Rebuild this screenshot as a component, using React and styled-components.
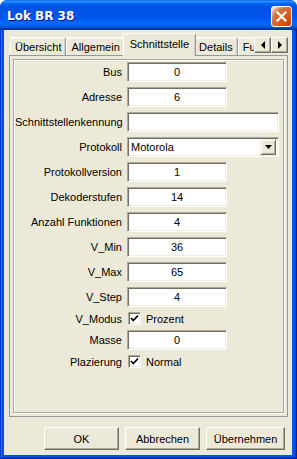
import React from 'react';
import styled, { createGlobalStyle } from 'styled-components';

const GlobalStyle = createGlobalStyle`
  html, body {
    margin: 0;
    padding: 0;
    background: #ffffff;
  }
  body {
    font-family: "Liberation Sans", Arial, sans-serif;
    font-size: 11px;
    color: #000;
  }
`;

const Window = styled.div`
  width: 297px;
  height: 459px;
  display: flex;
  flex-direction: column;
  border-radius: 7px 7px 0 0;
  overflow: hidden;
  background: #0054E3;
`;

const TitleBar = styled.div`
  height: 30px;
  flex-shrink: 0;
  display: flex;
  align-items: center;
  justify-content: space-between;
  padding: 2px 5px 0 7px;
  box-sizing: border-box;
  background: linear-gradient(
    to bottom,
    #0058ee 0%, #3593ff 4%, #288eff 6%, #127dff 8%, #036ffc 10%,
    #0262ee 14%, #0057e5 20%, #0054e3 24%, #0055eb 56%, #005bf5 66%,
    #026afe 76%, #0062ef 86%, #0052d6 92%, #0040ab 94%, #003092 100%
  );
`;

const Title = styled.span`
  font-family: "DejaVu Sans", "Liberation Sans", sans-serif;
  font-weight: bold;
  font-size: 12px;
  color: #fff;
  text-shadow: 1px 1px #0f1089;
`;

const CloseButton = styled.div`
  width: 21px;
  height: 21px;
  box-sizing: border-box;
  border: 1px solid #fff;
  border-radius: 3px;
  display: flex;
  align-items: center;
  justify-content: center;
  background: radial-gradient(circle at 90% 90%, #cc4600 0%, #dc6527 55%, #cd7546 70%, #ffccb2 90%, #fff 100%);
`;

const Frame = styled.div`
  flex: 1;
  min-width: 0;
  display: flex;
  padding: 0 5px 4px 4px;
  background: #0054e3;
  box-shadow: inset 1px 0 #0831d9, inset -1px -1px #001ea0, inset 2px 0 #166aee, inset -2px -2px #003dd0;
`;

const Client = styled.div`
  flex: 1;
  min-width: 0;
  display: flex;
  flex-direction: column;
  background: #ece9d8;
  padding: 3px 4px 5px 5px;
`;

const TabStrip = styled.div`
  display: flex;
  min-width: 0;
  height: 23px;
  margin-bottom: -1px;
  position: relative;
  z-index: 1;
`;

const TabViewport = styled.div`
  flex: 1;
  min-width: 0;
  display: flex;
  align-items: flex-end;
  overflow: hidden;
  padding-left: 1px;
`;

const Tab = styled.div`
  flex-shrink: 0;
  box-sizing: border-box;
  height: ${p => (p.$active ? '23px' : '18px')};
  padding: ${p => (p.$active ? '3px 6px 0 6px' : '2px 4px 0 4px')};
  margin: ${p => (p.$active ? '0 -2px' : '0 0 1px 0')};
  position: relative;
  z-index: ${p => (p.$active ? 2 : 1)};
  background: #ece9d8;
  border-top: 1px solid #fff;
  border-left: 1px solid #fff;
  border-right: 1px solid #919b9c;
  border-radius: 2px 2px 0 0;
  box-shadow: ${p => (p.$active ? 'inset -1px 0 #d4d0c8' : 'inset -1px 0 #d4d0c8, inset 0 1px #f8f7f2')};
  white-space: nowrap;
  line-height: 14px;
  font-size: 11px;
`;

const Scroller = styled.div`
  display: flex;
  flex-shrink: 0;
  margin-top: 4px;
  align-self: flex-start;
`;

const ScrollButton = styled.div`
  width: 17px;
  height: 16px;
  box-sizing: border-box;
  display: flex;
  align-items: center;
  justify-content: center;
  background: #ece9d8;
  border-top: 1px solid #fff;
  border-left: 1px solid #fff;
  border-right: 1px solid #716f64;
  border-bottom: 1px solid #716f64;
  box-shadow: inset -1px -1px #aca899;
`;

const TabPage = styled.div`
  flex: 1;
  display: flex;
  padding: 3px;
  border: 1px solid #919b9c;
  background: #ece9d8;
`;

const Group = styled.div`
  flex: 1;
  border: 1px solid #aca899;
  box-shadow: inset 1px 1px #fff, 1px 1px #fff;
  padding: 2px 0 0 1px;
`;

const Form = styled.div`
  display: grid;
  grid-template-columns: 107px 152px;
  column-gap: 5px;
  row-gap: 5px;
  align-items: center;
`;

const Label = styled.div`
  text-align: right;
  white-space: nowrap;
  font-size: 11px;
`;

const Field = styled.div`
  width: ${p => (p.$wide ? '152px' : '100px')};
  height: 20px;
  box-sizing: border-box;
  background: #fff;
  border: 1px solid;
  border-color: #aca899 #fff #fff #aca899;
  box-shadow: inset 1px 1px #716f64, inset -1px -1px #f1efe2;
  display: flex;
  align-items: center;
  justify-content: ${p => (p.$left ? 'flex-start' : 'center')};
  padding: ${p => (p.$left ? '0 0 0 3px' : '0')};
  font-size: 11px;
`;

const Combo = styled(Field)`
  justify-content: space-between;
  padding: 0 2px 0 3px;
`;

const DropButton = styled.div`
  width: 16px;
  height: 16px;
  box-sizing: border-box;
  display: flex;
  align-items: center;
  justify-content: center;
  background: #ece9d8;
  border-top: 1px solid #f1efe2;
  border-left: 1px solid #f1efe2;
  border-right: 1px solid #716f64;
  border-bottom: 1px solid #716f64;
  box-shadow: inset 1px 1px #fff, inset -1px -1px #aca899;
`;

const CheckRow = styled.div`
  display: flex;
  align-items: center;
  gap: 5px;
  height: 13px;
  padding-left: 1px;
`;

const CheckBox = styled.div`
  width: 13px;
  height: 13px;
  box-sizing: border-box;
  background: #fff;
  border: 1px solid;
  border-color: #aca899 #fff #fff #aca899;
  box-shadow: inset 1px 1px #716f64, inset -1px -1px #f1efe2;
  display: flex;
  align-items: center;
  justify-content: center;
`;

const ButtonRow = styled.div`
  display: flex;
  justify-content: flex-end;
  gap: 6px;
  margin-top: 10px;
  padding-right: 3px;
`;

const Button = styled.div`
  width: ${p => (p.$w || 75)}px;
  height: 23px;
  box-sizing: border-box;
  display: flex;
  align-items: center;
  justify-content: center;
  background: #ece9d8;
  border-top: 1px solid #fff;
  border-left: 1px solid #fff;
  border-right: 1px solid #716f64;
  border-bottom: 1px solid #716f64;
  box-shadow: inset -1px -1px #aca899;
  font-size: 11px;
`;

const Arrow = ({ dir }) => {
  const pts = {
    left: '5,1 5,9 1,5',
    right: '1,1 1,9 5,5',
    down: '0,2 7,2 3.5,6',
  }[dir];
  return (
    <svg width={dir === 'down' ? 7 : 6} height={dir === 'down' ? 8 : 10} viewBox={dir === 'down' ? '0 0 7 8' : '0 0 6 10'}>
      <polygon points={pts} fill="#000" />
    </svg>
  );
};

const Check = () => (
  <svg width="9" height="9" viewBox="0 0 9 9">
    <path d="M1 4 L3.3 6.5 L8 1.5" stroke="#000" strokeWidth="1.8" fill="none" />
  </svg>
);

const rowsTop = [
  { label: 'Bus', value: '0' },
  { label: 'Adresse', value: '6' },
  { label: 'Schnittstellenkennung', value: '', wide: true },
];

const rowsMid = [
  { label: 'Protokollversion', value: '1' },
  { label: 'Dekoderstufen', value: '14' },
  { label: 'Anzahl Funktionen', value: '4' },
  { label: 'V_Min', value: '36' },
  { label: 'V_Max', value: '65' },
  { label: 'V_Step', value: '4' },
];

const tabs = ['Übersicht', 'Allgemein', 'Schnittstelle', 'Details', 'Funktionen'];

export default function App() {
  const renderRow = r => (
    <React.Fragment key={r.label}>
      <Label>{r.label}</Label>
      <Field $wide={r.wide}>{r.value}</Field>
    </React.Fragment>
  );

  return (
    <>
      <GlobalStyle />
      <Window>
        <TitleBar>
          <Title>Lok BR 38</Title>
          <CloseButton>
            <svg width="11" height="11" viewBox="0 0 11 11">
              <path d="M1.5 1.5 L9.5 9.5 M9.5 1.5 L1.5 9.5" stroke="#fff" strokeWidth="2.2" strokeLinecap="square" />
            </svg>
          </CloseButton>
        </TitleBar>
        <Frame>
          <Client>
            <TabStrip>
              <TabViewport>
                {tabs.map(t => (
                  <Tab key={t} $active={t === 'Schnittstelle'}>{t}</Tab>
                ))}
              </TabViewport>
              <Scroller>
                <ScrollButton><Arrow dir="left" /></ScrollButton>
                <ScrollButton><Arrow dir="right" /></ScrollButton>
              </Scroller>
            </TabStrip>
            <TabPage>
              <Group>
                <Form>
                  {rowsTop.map(renderRow)}
                  <Label>Protokoll</Label>
                  <Combo $wide $left>
                    <span>Motorola</span>
                    <DropButton><Arrow dir="down" /></DropButton>
                  </Combo>
                  {rowsMid.map(renderRow)}
                  <Label>V_Modus</Label>
                  <CheckRow>
                    <CheckBox><Check /></CheckBox>
                    <span>Prozent</span>
                  </CheckRow>
                  <Label>Masse</Label>
                  <Field>0</Field>
                  <Label>Plazierung</Label>
                  <CheckRow>
                    <CheckBox><Check /></CheckBox>
                    <span>Normal</span>
                  </CheckRow>
                </Form>
              </Group>
            </TabPage>
            <ButtonRow>
              <Button>OK</Button>
              <Button>Abbrechen</Button>
              <Button $w={79}>Übernehmen</Button>
            </ButtonRow>
          </Client>
        </Frame>
      </Window>
    </>
  );
}
